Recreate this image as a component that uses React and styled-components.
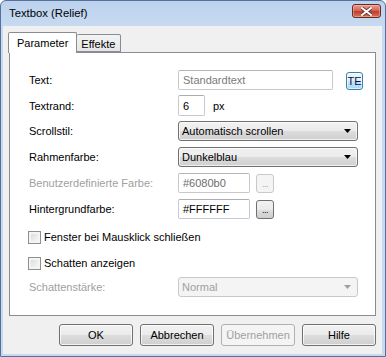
import React from "react";
import styled, { createGlobalStyle } from "styled-components";

const Global = createGlobalStyle`
  html, body { margin: 0; padding: 0; background: #ffffff; }
  body { width: 386px; height: 357px; overflow: hidden; font-family: "Liberation Sans", Arial, sans-serif; font-size: 11px; }
`;

const Window = styled.div`
  width: 386px;
  height: 357px;
  box-sizing: border-box;
  display: flex;
  flex-direction: column;
  background: linear-gradient(#bcd2ed, #c7daf1 26px, #c7daf1);
  border: 1px solid #53719a;
  border-radius: 6px 6px 0 0;
  padding: 0 3px 2px 2px;
`;

const TitleBar = styled.div`
  height: 25px;
  flex: none;
  display: flex;
  align-items: center;
  justify-content: space-between;
  padding: 0 0 0 6px;
`;

const Title = styled.span`
  font-family: "Liberation Sans", Arial, sans-serif;
  font-size: 11.3px;
  color: #000;
  margin-top: -2px;
`;

const CloseButton = styled.div`
  width: 29px;
  height: 14px;
  box-sizing: border-box;
  border: 1px solid #6b2a22;
  border-radius: 3px;
  background: linear-gradient(#e8a093, #d0604f 50%, #c03a27 51%, #d1735f);
  display: flex;
  align-items: center;
  justify-content: center;
  margin: -5px 1px 0 0;
  box-shadow: inset 0 0 0 1px rgba(255, 200, 190, 0.45);
`;

const Client = styled.div`
  flex: 1;
  background: #f0f0f0;
  display: flex;
  flex-direction: column;
  padding: 6px 6px 8px 6px;
  box-sizing: border-box;
`;

const TabRow = styled.div`
  display: flex;
  align-items: flex-end;
  height: 20px;
  padding-left: 0px;
  position: relative;
  z-index: 1;
`;

const Tab = styled.div`
  box-sizing: border-box;
  height: ${(p) => (p.$active ? "21px" : "18px")};
  margin-bottom: ${(p) => (p.$active ? "-1px" : "0")};
  padding: ${(p) => (p.$active ? "3px 8px 0 8px" : "2px 5px 0 4px")};
  border: 1px solid #898c95;
  border-bottom: ${(p) => (p.$active ? "none" : "1px solid #898c95")};
  border-left: ${(p) => (p.$first ? "1px solid #898c95" : "none")};
  background: ${(p) => (p.$active ? "#ffffff" : "linear-gradient(#f3f3f3, #e6e6e6)")};
  border-radius: 2px 2px 0 0;
  color: #000;
  font-size: 11px;
  line-height: 14px;
  margin-left: ${(p) => (p.$first ? "-1px" : "0")};
`;

const Panel = styled.div`
  height: 264px;
  box-sizing: border-box;
  border: 1px solid #898c95;
  background: #ffffff;
  padding: 16px 16px 0 19px;
  display: flex;
  flex-direction: column;
  gap: 6px;
`;

const Row = styled.div`
  display: grid;
  grid-template-columns: 149px 1fr;
  align-items: center;
  height: 20px;
  margin-top: ${(p) => p.$mt || 0}px;
`;

const CheckRow = styled.label`
  display: flex;
  align-items: center;
  gap: 3px;
  height: 20px;
  margin-top: ${(p) => p.$mt || 0}px;
  color: #000;
`;

const Label = styled.span`
  color: ${(p) => (p.$disabled ? "#a0a0a0" : "#000")};
  font-size: 11px;
`;

const Controls = styled.div`
  display: flex;
  align-items: center;
  gap: ${(p) => p.$gap || 6}px;
`;

const TextBox = styled.div`
  box-sizing: border-box;
  width: ${(p) => p.$w}px;
  height: ${(p) => p.$h || 20}px;
  border: 1px solid ${(p) => (p.$disabled ? "#c9c9c9" : "#c3cad4")};
  border-top-color: ${(p) => (p.$disabled ? "#b7b7b7" : "#abadb3")};
  border-radius: 2px;
  background: #fff;
  padding: 0 4px;
  display: flex;
  align-items: center;
  color: ${(p) => p.$color || "#000"};
  font-size: 11px;
`;

const TeButton = styled.div`
  box-sizing: border-box;
  width: 17px;
  height: 18px;
  border: 1px solid #3c7fb1;
  border-radius: 3px;
  background: linear-gradient(#eaf6fd, #d9f0fc 50%, #bee6fd 51%, #a7d9f5);
  box-shadow: inset 0 0 0 1px rgba(255, 255, 255, 0.6);
  display: flex;
  align-items: center;
  justify-content: center;
  color: #1a0a3a;
  font-size: 11px;
  margin-left: 7px;
  margin-top: 3px;
`;

const Unit = styled.span`
  color: #000;
  margin-left: 2px;
`;

const Select = styled.div`
  box-sizing: border-box;
  width: 180px;
  height: 20px;
  border: 1px solid ${(p) => (p.$disabled ? "#c9c9c9" : "#707070")};
  border-radius: 3px;
  background: ${(p) =>
    p.$disabled
      ? "#f4f4f4"
      : "linear-gradient(#f2f2f2, #ebebeb 50%, #dddddd 51%, #cfcfcf)"};
  box-shadow: inset 0 0 0 1px rgba(255, 255, 255, ${(p) => (p.$disabled ? 0 : 0.7)});
  display: flex;
  align-items: center;
  justify-content: space-between;
  padding: 0 6px 0 3px;
  color: ${(p) => (p.$disabled ? "#a0a0a0" : "#000")};
  font-size: 11px;
`;

const DotsButton = styled.div`
  box-sizing: border-box;
  width: 18px;
  height: 19px;
  border: 1px solid ${(p) => (p.$disabled ? "#c9c9c9" : "#707070")};
  border-radius: 3px;
  background: ${(p) =>
    p.$disabled
      ? "#f4f4f4"
      : "linear-gradient(#f2f2f2, #ebebeb 50%, #dddddd 51%, #cfcfcf)"};
  display: flex;
  align-items: flex-end;
  justify-content: center;
  padding-bottom: 3px;
  color: ${(p) => (p.$disabled ? "#a0a0a0" : "#000")};
  font-size: 9px;
  line-height: 9px;
  letter-spacing: -0.5px;
`;

const CheckBox = styled.span`
  box-sizing: border-box;
  width: 13px;
  height: 13px;
  border: 1px solid #8e8f8f;
  background: linear-gradient(135deg, #d6d6d6, #fdfdfd);
  box-shadow: inset 0 0 0 2px #f4f4f4;
  margin-left: -1px;
  flex: none;
`;

const ButtonRow = styled.div`
  display: flex;
  justify-content: flex-end;
  gap: 7px;
  margin-top: 8px;
`;

const Button = styled.div`
  box-sizing: border-box;
  width: 74px;
  height: 22px;
  border: 1px solid ${(p) => (p.$disabled ? "#adb2b5" : "#707070")};
  border-radius: 3px;
  background: ${(p) =>
    p.$disabled
      ? "#f4f4f4"
      : "linear-gradient(#f2f2f2, #ebebeb 50%, #dddddd 51%, #cfcfcf)"};
  box-shadow: inset 0 0 0 1px rgba(255, 255, 255, ${(p) => (p.$disabled ? 0 : 0.75)});
  display: flex;
  align-items: center;
  justify-content: center;
  color: ${(p) => (p.$disabled ? "#a0a0a0" : "#000")};
  font-size: 11px;
`;

const Arrow = ({ color = "#000" }) => (
  <svg width="7" height="4" viewBox="0 0 7 4">
    <path d="M0 0 H7 L3.5 4 Z" fill={color} />
  </svg>
);

const CloseX = () => (
  <svg width="11" height="9" viewBox="0 0 11 9">
    <path
      d="M1 1 L10 8 M10 1 L1 8"
      stroke="#5a2a2a"
      strokeWidth="3.4"
      strokeLinecap="square"
    />
    <path
      d="M1 1 L10 8 M10 1 L1 8"
      stroke="#ffffff"
      strokeWidth="2"
      strokeLinecap="square"
    />
  </svg>
);

export default function App() {
  return (
    <>
      <Global />
      <Window>
        <TitleBar>
          <Title>Textbox (Relief)</Title>
          <CloseButton>
            <CloseX />
          </CloseButton>
        </TitleBar>
        <Client>
          <TabRow>
            <Tab $active $first>Parameter</Tab>
            <Tab>Effekte</Tab>
          </TabRow>
          <Panel>
            <Row>
              <Label>Text:</Label>
              <Controls $gap={0}>
                <TextBox $w={155} $color="#7a7a7a" $disabled>Standardtext</TextBox>
                <TeButton>TE</TeButton>
              </Controls>
            </Row>
            <Row>
              <Label>Textrand:</Label>
              <Controls $gap={6}>
                <TextBox $w={27} $h={21}>6</TextBox>
                <Unit>px</Unit>
              </Controls>
            </Row>
            <Row>
              <Label>Scrollstil:</Label>
              <Select>
                <span>Automatisch scrollen</span>
                <Arrow />
              </Select>
            </Row>
            <Row>
              <Label>Rahmenfarbe:</Label>
              <Select>
                <span>Dunkelblau</span>
                <Arrow />
              </Select>
            </Row>
            <Row>
              <Label $disabled>Benutzerdefinierte Farbe:</Label>
              <Controls $gap={6}>
                <TextBox $w={72} $color="#6d6d6d" $disabled>#6080b0</TextBox>
                <DotsButton $disabled>...</DotsButton>
              </Controls>
            </Row>
            <Row>
              <Label>Hintergrundfarbe:</Label>
              <Controls $gap={6}>
                <TextBox $w={72}>#FFFFFF</TextBox>
                <DotsButton>...</DotsButton>
              </Controls>
            </Row>
            <CheckRow $mt={2}>
              <CheckBox />
              <span>Fenster bei Mausklick schließen</span>
            </CheckRow>
            <CheckRow>
              <CheckBox />
              <span>Schatten anzeigen</span>
            </CheckRow>
            <Row $mt={-2}>
              <Label $disabled>Schattenstärke:</Label>
              <Select $disabled>
                <span>Normal</span>
                <Arrow color="#a0a0a0" />
              </Select>
            </Row>
          </Panel>
          <ButtonRow>
            <Button>OK</Button>
            <Button>Abbrechen</Button>
            <Button $disabled>Übernehmen</Button>
            <Button>Hilfe</Button>
          </ButtonRow>
        </Client>
      </Window>
    </>
  );
}
